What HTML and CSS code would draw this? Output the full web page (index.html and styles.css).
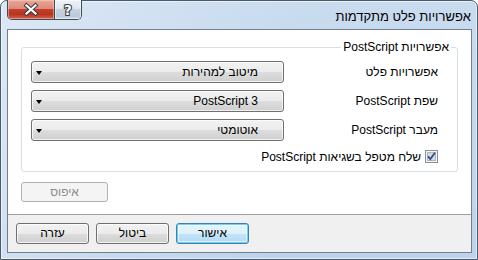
FILE: index.html
```html
<!DOCTYPE html>
<html lang="he" dir="rtl">
<head>
<meta charset="utf-8">
<title>אפשרויות פלט מתקדמות</title>
<link rel="stylesheet" href="styles.css">
</head>
<body>
<div class="window">
  <div class="titlebar">
    <div class="title">אפשרויות פלט מתקדמות</div>
    <div class="caption-btns">
      <div class="cap help">
        <svg width="27" height="19" viewBox="0 0 27 19"><text x="13.5" y="15" text-anchor="middle" class="qmark">?</text></svg>
      </div>
      <div class="cap close">
        <svg width="46" height="19" viewBox="0 0 46 19">
          <path d="M18.5 5.5 L27.5 13.5 M27.5 5.5 L18.5 13.5" stroke="#3a3f46" stroke-width="4.2" stroke-linecap="square" fill="none"/>
          <path d="M18.5 5.5 L27.5 13.5 M27.5 5.5 L18.5 13.5" stroke="#ffffff" stroke-width="2.2" stroke-linecap="square" fill="none"/>
        </svg>
      </div>
    </div>
  </div>
  <div class="client">
    <div class="content">
      <div class="group">
        <div class="legend">אפשרויות PostScript</div>
        <div class="row">
          <span class="label">אפשרויות פלט</span>
          <div class="combo"><span class="combo-text">מיטוב למהירות</span><i class="arrow"></i></div>
        </div>
        <div class="row">
          <span class="label">שפת PostScript</span>
          <div class="combo"><span class="combo-text">PostScript 3</span><i class="arrow"></i></div>
        </div>
        <div class="row">
          <span class="label">מעבר PostScript</span>
          <div class="combo"><span class="combo-text">אוטומטי</span><i class="arrow"></i></div>
        </div>
        <div class="check-row">
          <span class="checkbox">
            <svg width="13" height="13" viewBox="0 0 13 13">
              <rect x="0.5" y="0.5" width="12" height="12" fill="#f4f4f4" stroke="#8e8f8f"/>
              <rect x="2.5" y="2.5" width="8" height="8" fill="#d3dbe6" stroke="#a9b6c6"/>
              <path d="M3 6.3 L5.3 9 L10 2.8" stroke="#324f84" stroke-width="1.8" fill="none"/>
            </svg>
          </span>
          <span class="check-text">שלח מטפל בשגיאות PostScript</span>
        </div>
      </div>
      <div class="reset-row">
        <button class="btn reset" disabled>איפוס</button>
      </div>
    </div>
    <div class="footer">
      <button class="btn default">אישור</button>
      <button class="btn">ביטול</button>
      <button class="btn">עזרה</button>
    </div>
  </div>
</div>
</body>
</html>
```
FILE: styles.css
```css
* { box-sizing: border-box; }
html, body { margin: 0; padding: 0; }
body {
  width: 478px;
  height: 260px;
  overflow: hidden;
  background: #ffffff;
  font-family: "Liberation Sans", "DejaVu Sans", sans-serif;
  font-size: 12px;
  color: #000;
}
.window {
  width: 478px;
  height: 260px;
  border: 1px solid #4b5a6b;
  border-radius: 7px 7px 0 0;
  padding: 0 5px 6px 6px;
  background:
    linear-gradient(100deg, rgba(255,255,255,0.35) 0%, rgba(255,255,255,0.1) 40%, rgba(255,255,255,0) 60%),
    linear-gradient(to bottom, #c9dbef 0%, #bed3eb 100%);
  box-shadow: inset 0 0 0 1px rgba(255,255,255,0.55);
  display: flex;
  flex-direction: column;
}
.titlebar {
  height: 28px;
  display: flex;
  align-items: flex-start;
}
.title {
  font-size: 13px;
  line-height: 15px;
  padding-top: 8px;
  padding-right: 1px;
  color: #000;
}
.caption-btns {
  margin-inline-start: auto;
  margin-top: -1px;
  display: flex;
  border: 1px solid #3d4a58;
  border-top: none;
  border-radius: 0 0 5px 5px;
  overflow: hidden;
  height: 20px;
}
.cap { height: 19px; display: flex; }
.help {
  width: 27px;
  background: linear-gradient(to bottom, #eef2f7 0%, #dfe6ef 45%, #c6d2df 50%, #bccbdb 85%, #cfdbe7 100%);
  border-left: 1px solid #3d4a58;
  box-shadow: inset 0 0 0 1px rgba(255,255,255,0.5);
}
.close {
  width: 46px;
  background: linear-gradient(to bottom, #e8a797 0%, #dc8c7b 45%, #c43e2a 50%, #b7341f 75%, #d46348 100%);
  box-shadow: inset 0 0 0 1px rgba(255,220,210,0.45);
}
.qmark {
  font-family: "DejaVu Sans", sans-serif;
  font-weight: bold;
  font-size: 14px;
  fill: #ffffff;
  stroke: #3a3f46;
  stroke-width: 2.2px;
  paint-order: stroke;
}
.client {
  height: 224px;
  border: 1px solid #70808f;
  background: #ffffff;
  display: flex;
  flex-direction: column;
}
.content {
  height: 184px;
  padding: 17px 13px 0 13px;
}
.group {
  border: 1px solid #d5dfe5;
  border-radius: 3px;
  padding: 0 19px 8px 9px;
  display: flex;
  flex-direction: column;
  align-items: stretch;
  gap: 7px;
}
.legend {
  align-self: flex-start;
  margin-top: -8px;
  margin-right: -13px;
  padding: 0 2px;
  line-height: 14px;
  height: 14px;
  background: #ffffff;
}
.row {
  display: flex;
  align-items: center;
  justify-content: space-between;
  height: 22px;
}
.label { line-height: 14px; }
.combo {
  width: 253px;
  flex: none;
  height: 22px;
  border: 1px solid #707070;
  border-radius: 3px;
  background: linear-gradient(to bottom, #f2f2f2 0%, #ebebeb 50%, #dddddd 51%, #cfcfcf 100%);
  box-shadow: inset 0 0 0 1px rgba(255,255,255,0.7);
  display: flex;
  align-items: center;
  padding: 0 25px 0 4px;
}
.combo-text { flex: 1; line-height: 14px; }
.arrow {
  width: 0;
  height: 0;
  border-left: 3.5px solid transparent;
  border-right: 3.5px solid transparent;
  border-top: 4px solid #000;
  margin-top: 1px;
}
.check-row {
  display: flex;
  align-items: center;
  gap: 4px;
  margin-top: 2px;
  height: 13px;
}
.checkbox { width: 13px; height: 13px; display: flex; flex: none; }
.check-text { line-height: 14px; }
.reset-row {
  display: flex;
  justify-content: flex-end;
  margin-top: 10px;
}
.btn {
  font-family: "Liberation Sans", "DejaVu Sans", sans-serif;
  font-size: 12px;
  color: #000;
  height: 21px;
  width: 73px;
  padding: 0;
  border: 1px solid #707070;
  border-radius: 3px;
  background: linear-gradient(to bottom, #f2f2f2 0%, #ebebeb 50%, #dddddd 51%, #cfcfcf 100%);
  box-shadow: inset 0 0 0 1px rgba(255,255,255,0.75);
  line-height: 17px;
}
.reset {
  width: 87px;
  height: 20px;
  color: #8b8b8b;
  border-color: #adb2b5;
  background: #f4f4f4;
  box-shadow: none;
}
.default {
  border-color: #3c7fb1;
  background: linear-gradient(to bottom, #e8f5fc 0%, #dcf0fb 50%, #c2e4f7 51%, #b4dcf3 100%);
  box-shadow: inset 0 0 0 1px #6fd0f6, inset 0 0 0 2px rgba(255,255,255,0.5);
}
.footer {
  height: 38px;
  border-top: 1px solid #9aa0a6;
  background: #f0f0f0;
  display: flex;
  justify-content: flex-end;
  align-items: flex-start;
  gap: 7px;
  padding: 8px 0 0 8px;
}
```
